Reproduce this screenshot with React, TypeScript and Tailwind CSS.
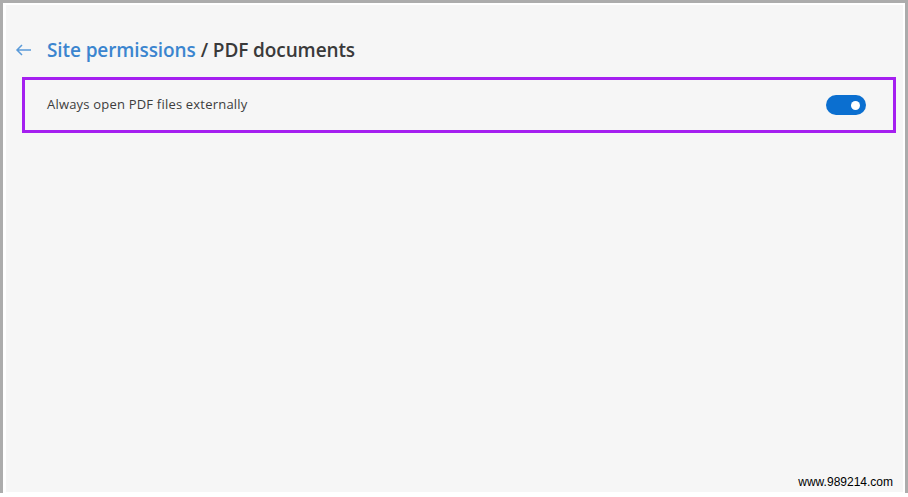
import React from "react";

const App: React.FC = () => {
  return (
    <div className="w-[908px] h-[497px] bg-white relative overflow-hidden" style={{ fontFamily: "'Open Sans', 'Noto Sans', sans-serif" }}>
      <div className="h-[493px] border-l-[3px] border-t-[3px] border-r-[3px] border-[#acacac] pt-[2px] pl-[3px] pr-[2px]">
        <div className="h-[487px] bg-[#f6f6f6] flex flex-col">
          <div className="flex items-center h-[34px] mt-[28px] pl-[9px]">
            <svg width="17" height="12" viewBox="0 0 17 12" className="mr-[15px]">
              <path d="M16 6H2M7 1L2 6l5 5" stroke="#5b9bd9" strokeWidth="1.5" fill="none" />
            </svg>
            <span className="text-[19px] font-semibold tracking-[-0.1px] text-[#3b85cf]">Site permissions</span>
            <span className="text-[19px] font-semibold tracking-[-0.1px] text-[#3a3a3a] ml-[5px]">/ PDF documents</span>
          </div>
          <div className="ml-[16px] mr-[7px] mt-[10px] h-[56px] border-[3px] border-[#a51ff0] flex items-center justify-between pl-[22px] pr-[27px]">
            <span className="text-[13px] tracking-[0.2px] text-[#3d3d3d]">Always open PDF files externally</span>
            <div className="w-[40px] h-[20px] rounded-full bg-[#0b6fd0] flex items-center justify-end pr-[6px]">
              <div className="w-[9px] h-[9px] rounded-full bg-white" />
            </div>
          </div>
        </div>
      </div>
      <div className="absolute right-[15px] bottom-[6px] text-[12px] text-black" style={{ fontFamily: "'Liberation Sans', Arial, sans-serif" }}>
        www.989214.com
      </div>
    </div>
  );
};

export default App;
